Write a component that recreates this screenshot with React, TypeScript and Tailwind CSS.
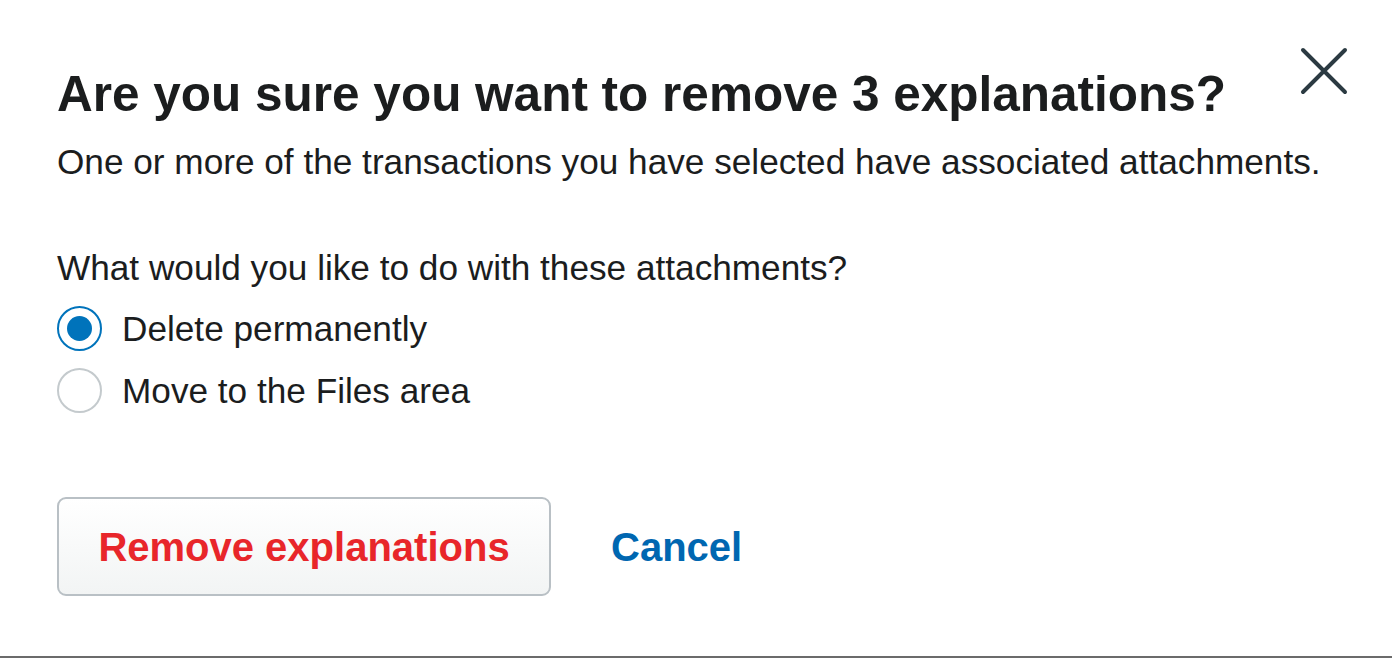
import { useState } from 'react';

const options = [
  { id: 'delete', label: 'Delete permanently' },
  { id: 'move', label: 'Move to the Files area' },
];

export default function App() {
  const [choice, setChoice] = useState('delete');

  return (
    <div className="relative h-[658px] w-[1392px] overflow-hidden border-b-2 border-[#6b6b6b] bg-white font-['Liberation_Sans',Arial,sans-serif] text-[#1b1d1e]">
      <button className="absolute right-[44px] top-[47px] h-[48px] w-[48px] text-[#2b3a42]" aria-label="Close">
        <svg viewBox="0 0 48 48" className="h-full w-full" fill="none" stroke="currentColor" strokeWidth="4" strokeLinecap="round">
          <path d="M3 3 L45 45 M45 3 L3 45" />
        </svg>
      </button>

      <div className="flex flex-col pl-[57px] pt-[66px]">
        <h2 className="text-[49.5px] font-bold leading-[56px]">Are you sure you want to remove 3 explanations?</h2>
        <p className="mt-[20px] text-[35.2px] leading-[40px]">
          One or more of the transactions you have selected have associated attachments.
        </p>

        <p className="mt-[66px] text-[35.2px] leading-[40px]">What would you like to do with these attachments?</p>
        <div className="mt-[18px] flex flex-col gap-[17px]">
          {options.map((o) => {
            const checked = choice === o.id;
            return (
              <label key={o.id} className="flex cursor-pointer items-center gap-[20px]" onClick={() => setChoice(o.id)}>
                <span
                  className={
                    checked
                      ? 'flex h-[45px] w-[45px] items-center justify-center rounded-full border-2 border-[#0073bb]'
                      : 'flex h-[45px] w-[45px] items-center justify-center rounded-full border-2 border-[#c4cacd]'
                  }
                >
                  {checked && <span className="h-[25px] w-[25px] rounded-full bg-[#0073bb]" />}
                </span>
                <span className="text-[35.2px] leading-[40px]">{o.label}</span>
              </label>
            );
          })}
        </div>

        <div className="mt-[84px] flex items-center gap-[60px]">
          <button className="h-[99px] w-[494px] rounded-[9px] border-2 border-[#b9c0c5] bg-gradient-to-b from-white to-[#f2f4f4] text-[40px] font-bold text-[#e8262a]">
            Remove explanations
          </button>
          <button className="text-[40px] font-bold text-[#0067b1]">Cancel</button>
        </div>
      </div>
    </div>
  );
}
